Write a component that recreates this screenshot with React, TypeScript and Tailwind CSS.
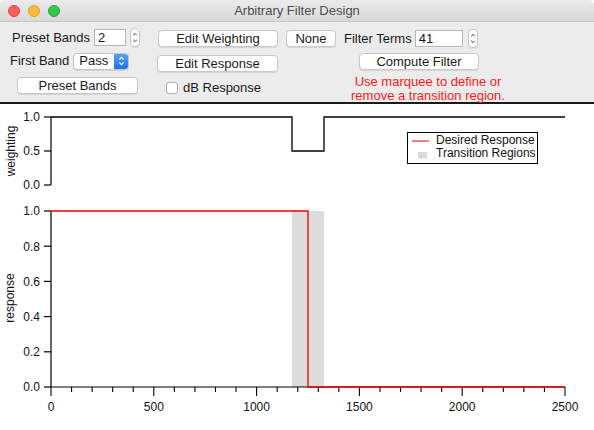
import type { ReactNode } from 'react';

function Stepper() {
  return (
    <div className="flex h-[19px] w-[10px] items-center justify-center rounded-[4px] border border-[#c6c6c6] bg-white shadow-[0_1px_0_rgba(0,0,0,0.06)]">
      <svg width="6" height="15" viewBox="0 0 6 15">
        <path d="M1.2 5.2 L3 3.4 L4.8 5.2 M1.2 9.8 L3 11.6 L4.8 9.8" stroke="#3a3a3a" strokeWidth="1" fill="none" />
      </svg>
    </div>
  );
}

function Btn({ className, children }: { className: string; children: ReactNode }) {
  return (
    <button
      className={`flex h-[17px] shrink-0 items-center justify-center whitespace-nowrap rounded-[4px] border border-[#c9c9c9] bg-white text-[13px] leading-none text-[#1a1a1a] shadow-[0_1px_1px_rgba(0,0,0,0.10)] ${className}`}
    >
      {children}
    </button>
  );
}

const yTicks = [1.0, 0.8, 0.6, 0.4, 0.2, 0.0];
const xToPx = (v: number) => 51 + (v / 2500) * 514;

export default function App() {
  return (
    <div className="h-[430px] w-[594px] overflow-hidden bg-white font-['Liberation_Sans',Arial,sans-serif] text-[#1a1a1a]">
      <div className="rounded-t-[5px]">
        {/* title bar */}
        <div className="relative flex h-[22px] items-center justify-center rounded-t-[5px] border-b border-[#c9c9c9] bg-gradient-to-b from-[#ebebeb] to-[#d9d9d9]">
          <div className="absolute left-[8px] top-[5px] flex gap-[8px]">
            <span className="h-[12px] w-[12px] rounded-full border border-[#e2463f] bg-[#fc605c]" />
            <span className="h-[12px] w-[12px] rounded-full border border-[#e1a116] bg-[#fdbc40]" />
            <span className="h-[12px] w-[12px] rounded-full border border-[#2aa13a] bg-[#34c84a]" />
          </div>
          <span className="text-[13px] text-[#4d4d4d]">Arbitrary Filter Design</span>
        </div>

        {/* control panel */}
        <div className="flex h-[82px] whitespace-nowrap border-b-[2px] border-[#1a1a1a] bg-[#ececec] text-[13px]">
          {/* left column */}
          <div className="ml-[10px] flex w-[130px] shrink-0 flex-col pt-[6px]">
            <div className="flex h-[19px] items-center pl-[2px]">
              <span className="shrink-0">Preset Bands</span>
              <div className="ml-[4px] flex h-[17px] w-[32px] shrink-0 items-center border border-[#b5b5b5] bg-white pl-[3px]">2</div>
              <div className="ml-[4px] shrink-0">
                <Stepper />
              </div>
            </div>
            <div className="mt-[5px] flex h-[18px] items-center">
              <span className="shrink-0">First Band</span>
              <div className="ml-[4px] flex h-[17px] w-[56px] shrink-0 items-center overflow-hidden rounded-[4px] border border-[#c4c4c4] bg-white shadow-[0_1px_1px_rgba(0,0,0,0.1)]">
                <span className="flex-1 pl-[5px]">Pass</span>
                <div className="flex h-full w-[14px] items-center justify-center bg-gradient-to-b from-[#5aa2f8] to-[#1c6ff2]">
                  <svg width="7" height="12" viewBox="0 0 7 12">
                    <path d="M1.3 4.6 L3.5 2.4 L5.7 4.6 M1.3 7.4 L3.5 9.6 L5.7 7.4" stroke="#fff" strokeWidth="1.2" fill="none" />
                  </svg>
                </div>
              </div>
            </div>
            <Btn className="ml-[7px] mt-[7px] w-[121px]">Preset Bands</Btn>
          </div>

          {/* middle column */}
          <div className="ml-[17px] flex w-[180px] shrink-0 flex-col pt-[8px]">
            <div className="flex">
              <Btn className="ml-[1px] w-[120px]">Edit Weighting</Btn>
              <Btn className="ml-[8px] w-[50px]">None</Btn>
            </div>
            <Btn className="mt-[8px] w-[121px]">Edit Response</Btn>
            <div className="ml-[9px] mt-[9px] flex h-[13px] items-center">
              <span className="h-[12px] w-[12px] rounded-[3px] border border-[#b0b0b0] bg-white" />
              <span className="ml-[5px]">dB Response</span>
            </div>
          </div>

          {/* right column */}
          <div className="ml-[7px] flex w-[170px] shrink-0 flex-col pt-[8px]">
            <div className="flex h-[17px] items-center">
              <span>Filter Terms</span>
              <div className="ml-[3px] flex h-[17px] w-[48px] items-center border border-[#b5b5b5] bg-white pl-[3px]">41</div>
              <div className="ml-[5px]">
                <Stepper />
              </div>
            </div>
            <Btn className="ml-[15px] mt-[6px] w-[120px]">Compute Filter</Btn>
            <div className="ml-[4px] mt-[5px] w-[160px] text-center text-[13px] leading-[14px] text-[#ff1a1a]">
              Use marquee to define or
              <br />
              remove a transition region.
            </div>
          </div>
        </div>
      </div>

      {/* graphs */}
      <svg width="594" height="326" viewBox="0 104 594 326" className="block">
        {/* weighting plot */}
        <g fontSize="12" fill="#111">
          {[
            ['1.0', 117],
            ['0.5', 151],
            ['0.0', 185],
          ].map(([l, y]) => (
            <g key={l as string}>
              <text x="40" y={(y as number) + 4.3} textAnchor="end">
                {l}
              </text>
              <line x1="44" x2="51" y1={y as number} y2={y as number} stroke="#000" strokeWidth="1.2" />
            </g>
          ))}
          <text transform="translate(14.5,151) rotate(-90)" textAnchor="middle">
            weighting
          </text>
        </g>
        <line x1="51" x2="51" y1="117" y2="185" stroke="#000" strokeWidth="1.2" />
        <path d="M51 117 H292 V151 H324 V117 H565" stroke="#000" strokeWidth="1.3" fill="none" />

        {/* legend */}
        <rect x="407.5" y="132.5" width="130" height="31" fill="#fff" stroke="#000" strokeWidth="1" />
        <line x1="412" x2="429" y1="141" y2="141" stroke="#e00000" strokeWidth="1" />
        <rect x="418" y="152" width="9" height="6.5" fill="#dcdcdc" />
        <text x="436" y="144.3" fontSize="12" fill="#111">
          Desired Response
        </text>
        <text x="436" y="156.8" fontSize="12" fill="#111">
          Transition Regions
        </text>

        {/* response plot */}
        <rect x="292" y="211" width="32" height="176" fill="#dcdcdc" />
        <g fontSize="12" fill="#111">
          {yTicks.map((v, i) => {
            const y = 211 + i * 35.2;
            return (
              <g key={v}>
                <text x="40" y={y + 4.3} textAnchor="end">
                  {v.toFixed(1)}
                </text>
                <line x1="44" x2="51" y1={y} y2={y} stroke="#000" strokeWidth="1.2" />
              </g>
            );
          })}
          <text transform="translate(14,298) rotate(-90)" textAnchor="middle">
            response
          </text>
          {Array.from({ length: 26 }, (_, i) => {
            const x = xToPx(i * 100);
            const major = i % 5 === 0;
            return (
              <g key={i}>
                <line x1={x} x2={x} y1="387" y2={major ? 396 : 392} stroke="#000" strokeWidth="1.1" />
                {major && (
                  <text x={x} y="411" textAnchor="middle">
                    {i * 100}
                  </text>
                )}
              </g>
            );
          })}
        </g>
        <line x1="51" x2="51" y1="211" y2="387" stroke="#000" strokeWidth="1.2" />
        <line x1="51" x2="565" y1="387" y2="387" stroke="#000" strokeWidth="1.2" />
        <path d="M51 211 H308 V387 H565" stroke="#f00000" strokeWidth="1.3" fill="none" />
      </svg>
    </div>
  );
}
